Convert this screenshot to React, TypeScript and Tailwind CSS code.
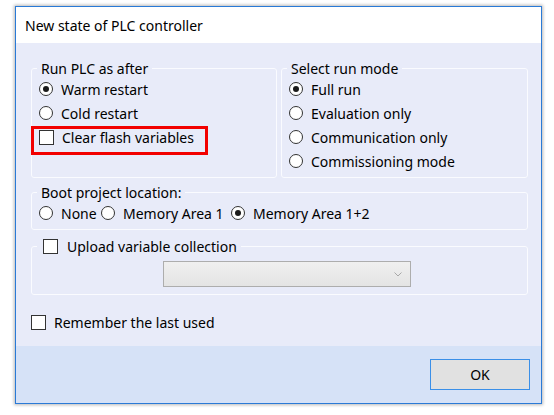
import React from "react";

function Radio({ checked }: { checked?: boolean }) {
  return (
    <span className="flex h-[14px] w-[14px] shrink-0 items-center justify-center rounded-full border border-[#333] bg-white">
      {checked && <span className="h-[6px] w-[6px] rounded-full bg-[#1a1a1a]" />}
    </span>
  );
}

function Check() {
  return <span className="block h-[15px] w-[15px] shrink-0 border border-[#333] bg-white" />;
}

function RadioRow({ label, checked }: { label: string; checked?: boolean }) {
  return (
    <label className="flex h-[24px] items-center gap-[8px] pl-[7px]">
      <Radio checked={checked} />
      <span>{label}</span>
    </label>
  );
}

const Legend = ({ children }: { children: React.ReactNode }) => (
  <legend className="ml-[5px] px-[4px] leading-[17px]">{children}</legend>
);

export default function App() {
  return (
    <div className="h-[415px] w-[554px] bg-white pt-[6px] pl-[15px] font-['Noto_Sans',sans-serif] text-[14px] text-black">
      <div className="flex h-[398px] w-[527px] flex-col border border-[#2a7ad6] shadow-[0_0_3px_1px_rgba(0,0,0,0.28)]">
        {/* title */}
        <div className="flex h-[36px] items-center bg-white pl-[9px] text-[14px]">New state of PLC controller</div>

        {/* body */}
        <div className="flex-1 bg-[#e8ebf9] pt-[17px] pr-[13px] pl-[15px]">
          <div className="flex gap-[4px]">
            <fieldset className="w-[246px] rounded-[3px] border border-[#fafbff]">
              <Legend>Run PLC as after</Legend>
              <RadioRow label="Warm restart" checked />
              <RadioRow label="Cold restart" />
              <div className="-ml-px mt-px flex h-[29px] w-[177px] items-start gap-[8px] border-[3px] border-[#f20000] pl-[5px]">
                <span className="mt-px">
                  <Check />
                </span>
                <span className="leading-[17px]">Clear flash variables</span>
              </div>
            </fieldset>
            <fieldset className="flex-1 rounded-[3px] border border-[#fafbff] pb-[4px]">
              <Legend>Select run mode</Legend>
              <RadioRow label="Full run" checked />
              <RadioRow label="Evaluation only" />
              <RadioRow label="Communication only" />
              <RadioRow label="Commissioning mode" />
            </fieldset>
          </div>

          <fieldset className="mt-[6px] rounded-[3px] border border-[#fafbff] pb-[4px]">
            <Legend>Boot project location:</Legend>
            <div className="flex h-[24px] items-center pl-[7px]">
              <label className="flex w-[62px] items-center gap-[8px]">
                <Radio />
                <span>None</span>
              </label>
              <label className="flex w-[130px] items-center gap-[8px]">
                <Radio />
                <span>Memory Area 1</span>
              </label>
              <label className="flex items-center gap-[8px]">
                <Radio checked />
                <span>Memory Area 1+2</span>
              </label>
            </div>
          </fieldset>

          <fieldset className="mt-[8px] rounded-[3px] border border-[#fafbff] pb-[7px]">
            <legend className="ml-[5px] px-[4px] leading-[17px]">
              <span className="flex items-center gap-[9px] pl-[2px]">
                <Check />
                <span>Upload variable collection</span>
              </span>
            </legend>
            <div className="mt-[6px] ml-[131px] flex h-[26px] w-[248px] items-center justify-end border border-[#adadad] bg-gradient-to-b from-[#f0f0f0] to-[#e4e4e4] pr-[8px]">
              <svg width="8" height="5" viewBox="0 0 8 5" fill="none">
                <path d="M0.5 0.5 L4 4 L7.5 0.5" stroke="#a8a8a8" strokeWidth="1" />
              </svg>
            </div>
          </fieldset>

          <label className="mt-[15px] flex h-[24px] items-center gap-[8px]">
            <Check />
            <span>Remember the last used</span>
          </label>
        </div>

        {/* footer */}
        <div className="flex h-[57px] items-start justify-end bg-[#d6e2f7] pt-[13px] pr-[11px]">
          <button className="flex h-[31px] w-[100px] items-center justify-center border border-[#3a8fe8] bg-[#e1e1e1] text-[14px]">
            OK
          </button>
        </div>
      </div>
    </div>
  );
}
